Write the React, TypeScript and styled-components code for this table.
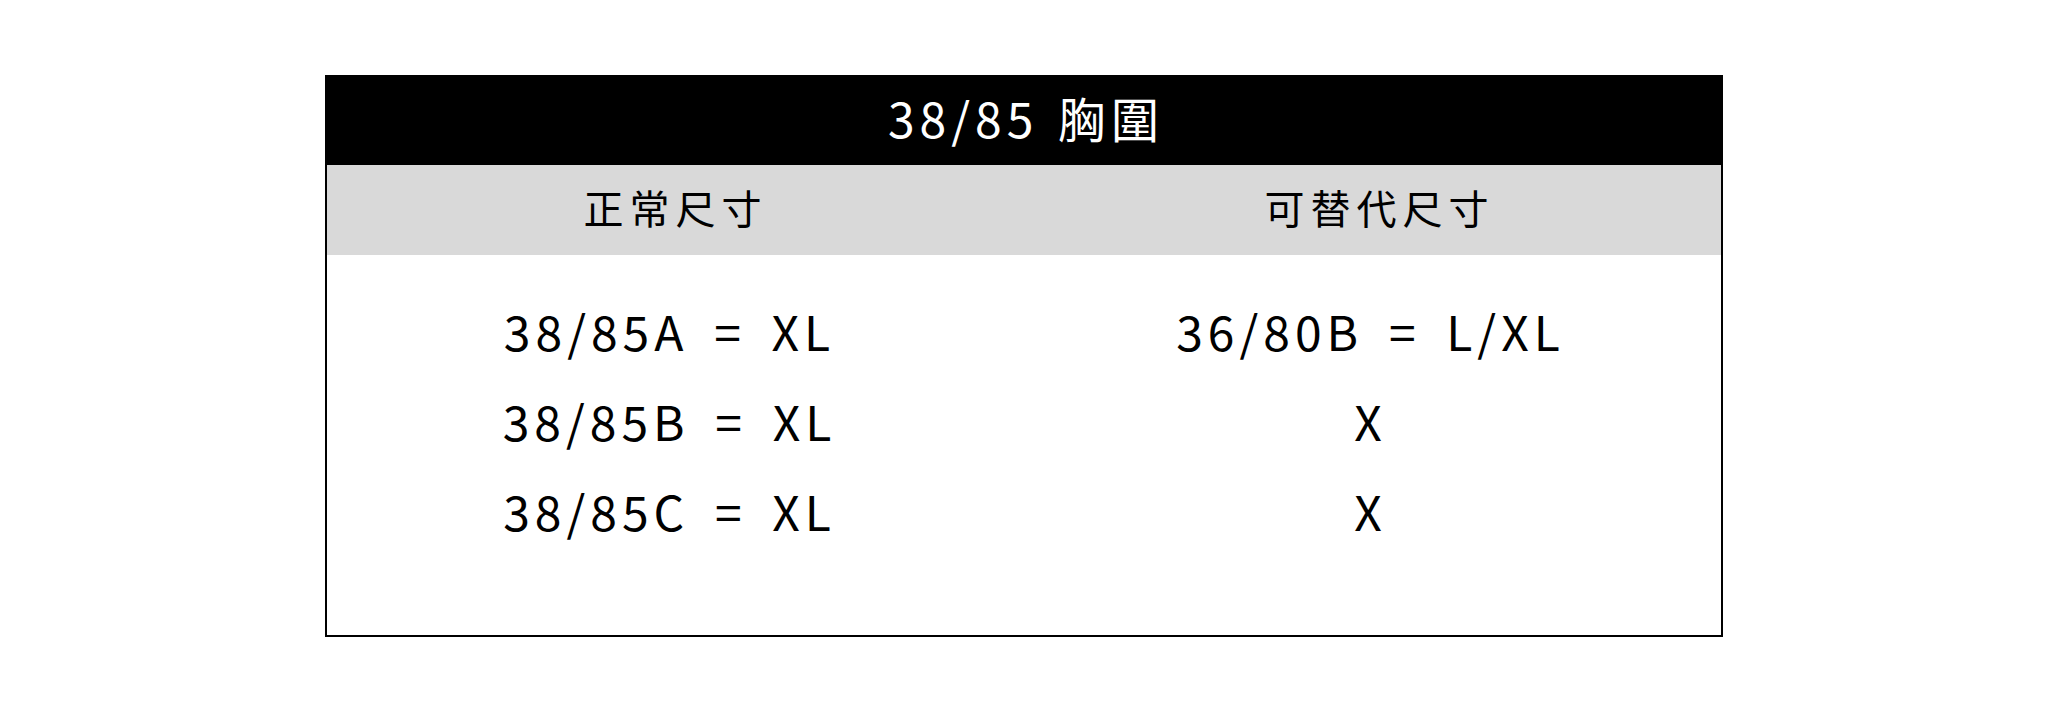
import React from "react";
import styled, { createGlobalStyle } from "styled-components";

const Global = createGlobalStyle`
  html, body { margin: 0; padding: 0; background: #ffffff; }
  body { font-family: "Noto Sans CJK TC", "Noto Sans", sans-serif; color: #000; }
`;

const Page = styled.div`
  width: 2048px;
  height: 713px;
  padding-top: 75px;
  box-sizing: border-box;
`;

const Table = styled.div`
  width: 1398px;
  margin: 0 auto;
  box-sizing: border-box;
  border: 2px solid #000;
  display: flex;
  flex-direction: column;
`;

const Title = styled.div`
  height: 88px;
  background: #000;
  color: #fff;
  display: flex;
  align-items: center;
  justify-content: center;
  font-size: 48px;
  letter-spacing: 5px;
  word-spacing: 4px;
  padding-bottom: 8px;
  padding-left: 4px;
  box-sizing: border-box;
`;

const HeadRow = styled.div`
  height: 90px;
  background: #d9d9d9;
  display: grid;
  grid-template-columns: 1fr 1fr;
  align-items: center;
  padding-bottom: 6px;
  box-sizing: border-box;
`;

const HeadCell = styled.div<{ $shift?: number }>`
  text-align: center;
  font-size: 40px;
  letter-spacing: 6px;
  line-height: 1;
  padding-left: ${(p) => p.$shift ?? 0}px;
`;

const Body = styled.div`
  height: 380px;
  padding-top: 30px;
  box-sizing: border-box;
  display: grid;
  grid-template-columns: 1fr 1fr;
  grid-auto-rows: 90px;
  align-items: center;
`;

const Cell = styled.div<{ $shift?: number }>`
  text-align: center;
  font-size: 48px;
  letter-spacing: 5px;
  word-spacing: 10px;
  line-height: 90px;
  white-space: pre;
  padding-right: ${(p) => p.$shift ?? 0}px;
`;

const rows: [string, string][] = [
  ["38/85A = XL", "36/80B = L/XL"],
  ["38/85B = XL", "X"],
  ["38/85C = XL", "X"],
];

export default function App() {
  return (
    <Page>
      <Global />
      <Table>
        <Title>38/85 胸圍</Title>
        <HeadRow>
          <HeadCell $shift={0}>正常尺寸</HeadCell>
          <HeadCell $shift={14}>可替代尺寸</HeadCell>
        </HeadRow>
        <Body>
          {rows.map(([a, b], i) => (
            <React.Fragment key={i}>
              <Cell $shift={12}>{a}</Cell>
              <Cell $shift={4}>{b}</Cell>
            </React.Fragment>
          ))}
        </Body>
      </Table>
    </Page>
  );
}
